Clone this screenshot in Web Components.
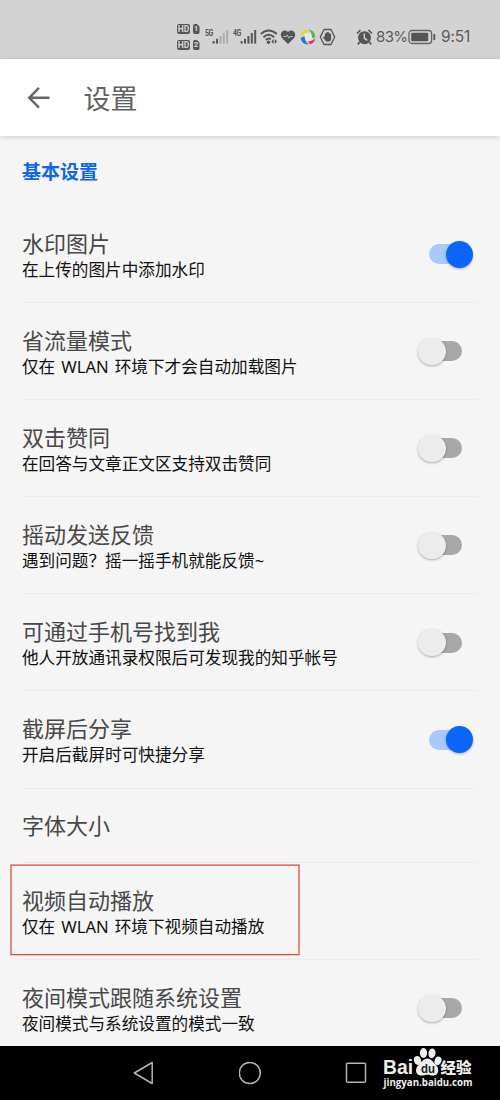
<!DOCTYPE html>
<html lang="zh-CN">
<head>
<meta charset="utf-8">
<title>设置</title>
<style>
html,body{margin:0;height:100%;overflow:hidden}
body{background:#f5f5f5;font-family:"Noto Sans","Noto Sans CJK SC",sans-serif}
</style>
</head>
<body>
<settings-screen></settings-screen>
<script>
function define(name, html) {
  const t = document.createElement('template');
  t.innerHTML = html;
  customElements.define(name, class extends HTMLElement {
    constructor() {
      super();
      this.attachShadow({mode: 'open'}).appendChild(t.content.cloneNode(true));
    }
  });
}

define('signal-bars', `
<style>
:host{display:flex;color:#555}
svg{display:block}
:host([weak]) .hi{opacity:.3}
div{font:700 8.5px/10px Roboto,sans-serif;letter-spacing:-.6px;transform:scaleX(.82);transform-origin:0 0;white-space:nowrap}
</style>
<svg width="24" height="18" viewBox="0 0 24 18" fill="currentColor">
<foreignObject x="0" y="0" width="14" height="11"><div><slot></slot></div></foreignObject>
<rect x="7.6" y="13" width="2" height="2.6"/><rect x="11" y="10.8" width="2" height="4.8"/>
<g class="hi"><rect x="14.4" y="8" width="2" height="7.6"/><rect x="17.8" y="5" width="2" height="10.6"/><rect x="21.2" y="2" width="2" height="13.6"/></g>
</svg>`);

define('hd-badge', `
<style>
:host{display:flex;gap:2.5px;height:10px}
b{display:block;box-sizing:border-box;background:#555;color:#d8d8d8;font:700 8.5px/10px Roboto,sans-serif;text-align:center;border-radius:2px}
.hd{width:13px}
.sim{width:7px;clip-path:polygon(0 0,65% 0,100% 28%,100% 100%,0 100%);font-size:8px}
</style>
<b class="hd">HD</b><b class="sim"><slot></slot></b>`);

define('status-bar', `
<style>
:host{display:flex;align-items:center;box-sizing:border-box;height:59px;padding:15px 0 0 177px;background:#d3d3d3;color:#5a5a5a;font:15.5px/20px Inter,sans-serif}
.hds{display:grid;gap:6px;width:28px}
svg{display:block;flex:none}
span{white-space:nowrap;font-size:15px;width:31px;letter-spacing:-.6px;font-weight:400}
.time{font-size:15.5px;letter-spacing:-.2px}
</style>
<div class="hds"><hd-badge>1</hd-badge><hd-badge>2</hd-badge></div>
<signal-bars weak>5G</signal-bars><signal-bars style="margin-left:4px">4G</signal-bars>
<svg style="margin-left:2.5px" width="19" height="18" viewBox="0 0 19 18" fill="none" stroke="#555" stroke-width="2"><path d="M.8 6Q8.500-1 16.800 6M3.400 9.200Q8.700 4.400 14.200 9.200M5.800 12Q8.600 9.600 10.800 11.300"/><circle cx="8.500" cy="14.300" r="1.700" fill="#555" stroke="none"/><path d="M13.600 11l-2.200 2.500 2.200 2.500zM14.800 11l2.200 2.500-2.200 2.500z" fill="#555" stroke="none"/></svg>
<svg style="margin-left:1.5px" width="16" height="16" viewBox="0 0 16 16"><path d="M8 15L2.200 9.200C-2 4.500 4-1.200 8 3.200 12-1.200 18 4.500 13.800 9.200z" fill="#555"/><path d="M3.500 7.500h2.700l1-1.600 1.700 3.200 1-1.600h2.600" fill="none" stroke="#c4c4c4" stroke-width=".9"/></svg>
<svg style="margin-left:3.5px" width="16" height="16" viewBox="0 0 16 16"><circle cx="8" cy="8" r="4.500" fill="#e6e6e6"/><path d="M.7 8C.5 4 3 .8 7 .6L8.500 3.500C5 3.500 3 5.500.7 8z" fill="#ecd61c"/><path d="M8.500.6C12.500.8 15.500 4 15.200 8.500L12 9C12 5.500 11 3 8.500.6z" fill="#58b452"/><path d="M15.200 9.500C14.800 12.500 13 14.700 10 15.300L7.800 12.500C11 12.300 13.500 11 15.200 9.500z" fill="#e03a48"/><path d="M.7 9C1 13 4.500 15.700 8.500 15.400 6 13.200 4.700 10.500 4.500 7z" fill="#2d74d8"/></svg>
<svg style="margin-left:3.5px" width="17" height="18" viewBox="0 0 17 18"><path d="M5 1.500h7L15.700 9 12 16.500H5L1.300 9z" fill="none" stroke="#555" stroke-width="1.300" stroke-linejoin="round"/><path d="M5.800 9V5.500h1.200V4.500h1.300V4h1.300v.7h1.300v1.300h1.200v5.500L10.800 13.500H7.200L4 9.500l.8-.9z" fill="#555"/></svg>
<svg style="margin-left:20px" width="17" height="17" viewBox="0 0 17 17"><path d="M1 4.500L4.500 1M12.500 1L16 4.500M3.500 13L2 15.500M13.500 13l1.500 2.500" stroke="#555" stroke-width="1.700"/><circle cx="8.500" cy="8.700" r="6.500" fill="#555"/><path d="M8.300 4.500v4.600l2.900 2.300" fill="none" stroke="#d3d3d3" stroke-width="1.400"/></svg>
<span style="margin-left:3px">83%</span>
<svg style="margin-left:1px" width="29" height="16" viewBox="0 0 29 16"><rect x="1" y="1.500" width="22.600" height="13" rx="3" fill="none" stroke="#666" stroke-width="1.300"/><rect x="3.200" y="3.700" width="17" height="8.600" rx="1" fill="#555"/><path d="M26.300 5v6" stroke="#555" stroke-width="1.800"/></svg>
<span class="time" style="margin-left:4px">9:51</span>`);

define('app-header', `
<style>
:host{display:flex;align-items:center;height:77px;box-sizing:border-box;padding:3px 0 0 27px;background:#fff;color:#616161;font-size:27px;line-height:36px;box-shadow:0 1px 5px rgba(0,0,0,.17);position:relative}
svg{display:block;margin:-2px 33.500px 0 0}
</style>
<svg width="23" height="22" viewBox="0 0 23 22" fill="none" stroke="#666" stroke-width="2.400"><path d="M12 .9L2.200 10.800 12 20.700M2.300 10.800H22.500"/></svg><slot></slot>`);

define('toggle-switch', `
<style>
:host{display:flex;align-items:center;width:55px;height:28px;flex:none}
.track{display:flex;align-items:center;width:33px;height:20px;border-radius:10px;margin-left:11px;background:#a8a8a8}
.thumb{flex:none;width:27.400px;height:27.400px;border-radius:50%;margin-left:-10.800px;background:#ececec;box-shadow:0 1px 2.500px rgba(0,0,0,.3)}
:host([on]) .track{background:#a8c9fb}
:host([on]) .thumb{margin-left:16.700px;background:#0a65fa}
</style>
<div class="track"><div class="thumb"></div></div>`);

define('setting-row', `
<style>
:host{display:flex;justify-content:space-between;box-sizing:border-box;height:97.100px;margin:0 22px;padding:23.600px 0 0;border-bottom:1px solid #ececec;color:#484848;font-size:22px;line-height:27px;white-space:nowrap}
:host([single]){height:74.500px}
:host([last]){border:0}
.sub{display:block;color:#111;font-size:16.640px;line-height:25px;word-spacing:1.700px}
.control{margin:10.600px 5px 0 0}
</style>
<div><slot></slot><span class="sub"><slot name="sub"></slot></span></div><div class="control"><slot name="control"></slot></div>`);

define('focus-frame', `
<style>
:host{position:absolute;left:10px;top:864px;width:290px;height:92px}
svg{display:block}
</style>
<svg width="290" height="92" fill="none" stroke="#dc4a42" stroke-width="1.300"><rect x="1" y="1.100" width="288" height="89.500"/></svg>`);

define('nav-bar', `
<style>
:host{display:flex;align-items:center;box-sizing:border-box;height:54px;padding-left:133px;background:#000;position:relative}
svg{display:block;margin-right:82px;flex:none}
</style>
<svg width="24" height="24" viewBox="0 0 24 24" fill="none" stroke="#b5b5b5" stroke-width="1.500" stroke-linejoin="round"><path d="M19.200 1.500v21L1.300 12z"/></svg>
<svg width="24" height="24" viewBox="0 0 24 24" fill="none" stroke="#b5b5b5" stroke-width="1.500"><circle cx="10.800" cy="12" r="10.500"/></svg>
<svg width="24" height="24" viewBox="0 0 24 24" fill="none" stroke="#b5b5b5" stroke-width="1.500"><rect x="1.500" y="2.300" width="19" height="19" rx="1"/></svg>
<slot></slot>`);

define('baidu-watermark', `
<style>
:host{position:absolute;left:382px;top:1px;width:100px;color:#eee}
svg{display:block}
text{fill:#eee}
</style>
<svg width="100" height="46" viewBox="0 0 100 46">
<text x="1" y="27" font-family="Liberation Sans" font-size="20" font-weight="700" textLength="30" lengthAdjust="spacingAndGlyphs">Bai</text>
<g fill="#eee"><ellipse cx="35.500" cy="13.500" rx="3.500" ry="4.400" transform="rotate(-20 35.500 13.500)"/><ellipse cx="41.500" cy="6" rx="3.600" ry="4.900"/><ellipse cx="50" cy="6.300" rx="3.500" ry="4.900" transform="rotate(8 50 6.300)"/><ellipse cx="56" cy="13.800" rx="3.400" ry="4.400" transform="rotate(20 56 13.800)"/>
<path d="M45.500 11.500c4 0 5.500 4 8.500 6.500 4 4 2.500 10-2 10.500-3 .3-4-.7-6.500-.7s-4 1-7 .7c-5-.6-6-6.500-2-10.500 3-2.700 5-6.500 9-6.500z"/></g>
<text x="39" y="25.500" font-family="Liberation Sans" font-size="12.500" font-weight="700" textLength="14" lengthAdjust="spacingAndGlyphs" style="fill:#222">du</text>
<text x="58.500" y="26" font-family="Noto Sans CJK SC" font-size="14.500" font-weight="900" textLength="31" lengthAdjust="spacingAndGlyphs">经验</text>
<text x="1.500" y="39" font-family="Open Sans" font-size="10.500" font-weight="700" textLength="89" lengthAdjust="spacingAndGlyphs">jingyan.baidu.com</text>
</svg>`);

const rows = [
  ['水印图片', '在上传的图片中添加水印', 'on'],
  ['省流量模式', '仅在 WLAN 环境下才会自动加载图片', 'off'],
  ['双击赞同', '在回答与文章正文区支持双击赞同', 'off'],
  ['摇动发送反馈', '遇到问题？摇一摇手机就能反馈~', 'off'],
  ['可通过手机号找到我', '他人开放通讯录权限后可发现我的知乎帐号', 'off'],
  ['截屏后分享', '开启后截屏时可快捷分享', 'on'],
  ['字体大小', '', ''],
  ['视频自动播放', '仅在 WLAN 环境下视频自动播放', ''],
  ['夜间模式跟随系统设置', '夜间模式与系统设置的模式一致', 'off']
];
define('settings-screen', `
<style>
:host{display:flex;flex-direction:column;height:1100px;width:500px;position:relative;overflow:hidden}
main{flex:1;min-height:0;overflow:hidden}
h2{margin:0;padding:23px 22px 0;height:47px;box-sizing:content-box;font-size:19px;line-height:26px;font-weight:700;color:#0d66ec}
</style>
<status-bar></status-bar>
<app-header>设置</app-header>
<main><h2>基本设置</h2>
${rows.map(([t, s, c], i) => `<setting-row${s ? '' : ' single'}${i === rows.length - 1 ? ' last' : ''}>${t}${s ? `<span slot="sub">${s}</span>` : ''}${c ? `<toggle-switch slot="control"${c === 'on' ? ' on' : ''}></toggle-switch>` : ''}</setting-row>`).join('')}
</main>
<nav-bar><baidu-watermark></baidu-watermark></nav-bar>
<focus-frame></focus-frame>`);
</script>
</body>
</html>
